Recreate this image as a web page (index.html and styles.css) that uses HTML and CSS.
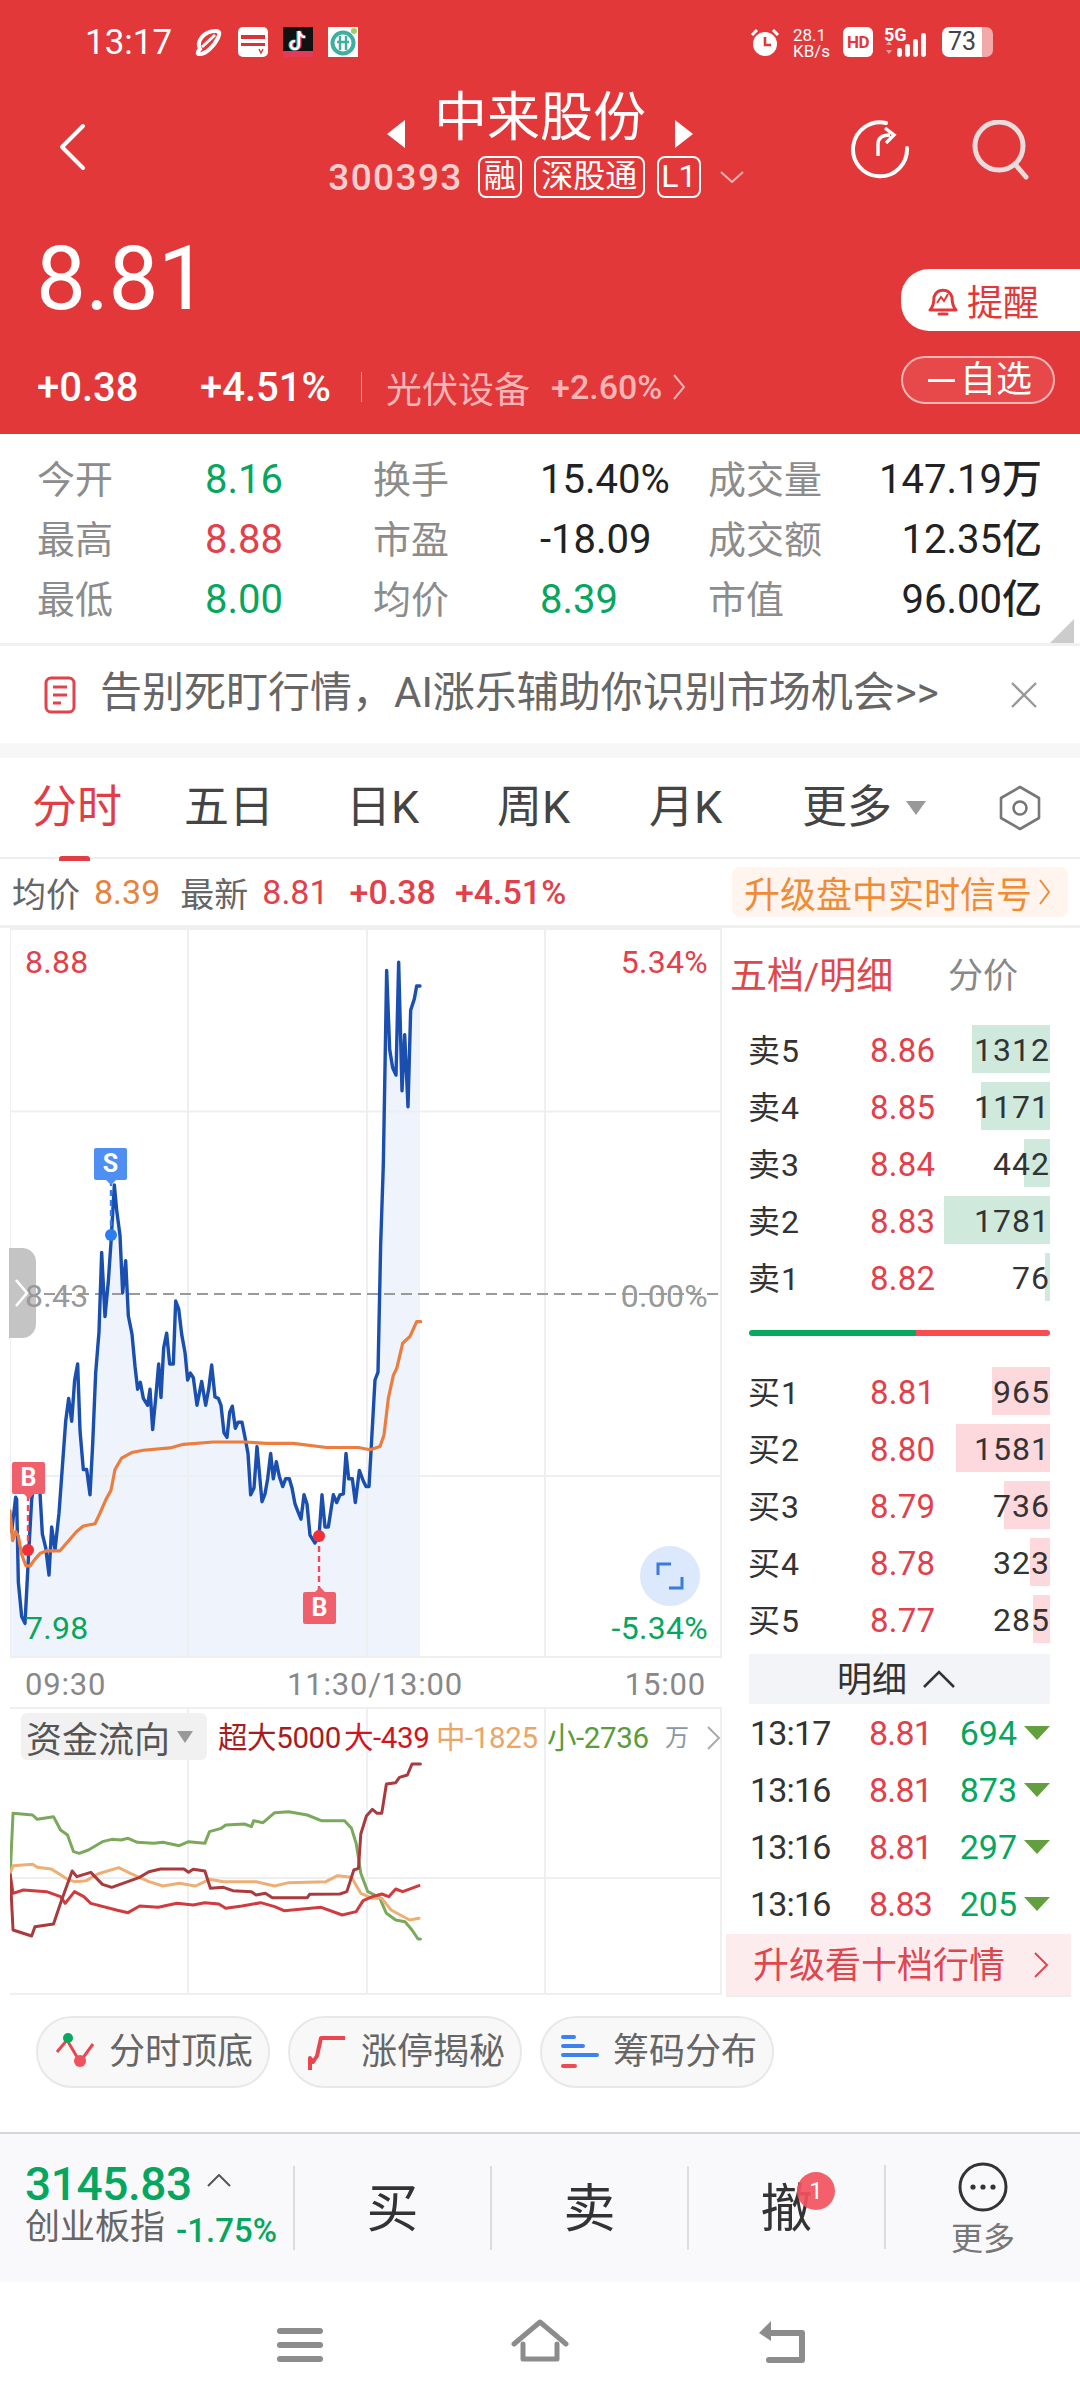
FILE: index.html
```html
<!DOCTYPE html>
<html lang="zh-CN">
<head>
<meta charset="utf-8">
<title>中来股份 300393</title>
<link rel="stylesheet" href="styles.css">
</head>
<body>
<div class="app">
  <header class="header">
    <div class="status">
      <div class="status-left">
        <span class="clock">13:17</span>
        <svg class="si" width="30" height="30" viewBox="0 0 30 30"><path d="M7 22 C3 14 11 4 23 4 C27 4 27 7 25 11 C21 19 13 27 7 27 C4 27 4 25 7 22Z" fill="none" stroke="#fff" stroke-width="4"/><path d="M9 20 L22 8" stroke="#fff" stroke-width="3"/></svg>
        <svg class="si" width="30" height="30" viewBox="0 0 30 30"><rect width="30" height="30" rx="5" fill="#fff"/><rect x="3" y="8" width="24" height="4" fill="#d8323a"/><rect x="3" y="16" width="24" height="3" fill="#d8323a"/><path d="M21 22l2 4 2-4" stroke="#d8323a" stroke-width="1.4" fill="none"/></svg>
        <svg class="si" width="30" height="30" viewBox="0 0 30 30"><rect width="30" height="30" fill="#111"/><path d="M16 4v14a4 4 0 1 1-4-4M16 4c1 4 3 6 6 6" fill="none" stroke="#2ee" stroke-width="3" transform="translate(-1 0)"/><path d="M16 4v14a4 4 0 1 1-4-4M16 4c1 4 3 6 6 6" fill="none" stroke="#f35" stroke-width="3" transform="translate(1 0)"/><path d="M16 4v14a4 4 0 1 1-4-4M16 4c1 4 3 6 6 6" fill="none" stroke="#fff" stroke-width="2.4"/><rect y="24" width="30" height="6" fill="#e23a58"/></svg>
        <svg class="si" width="30" height="30" viewBox="0 0 30 30"><rect width="30" height="30" fill="#fff"/><circle cx="15" cy="16" r="10.5" fill="none" stroke="#3fae9f" stroke-width="4"/><path d="M12 9v14M18 9v14M9 15h12" stroke="#3fae9f" stroke-width="2.4"/><circle cx="26" cy="4" r="3" fill="#9ccf6a"/></svg>
      </div>
      <div class="status-right">
        <svg width="30" height="30" viewBox="0 0 30 30"><circle cx="15" cy="17" r="12" fill="#fff"/><path d="M15 10v8h6" fill="none" stroke="#e2383a" stroke-width="2.6"/><path d="M2 8l5-5M28 8l-5-5" stroke="#fff" stroke-width="3"/></svg>
        <span class="net"><b>28.1</b><b>KB/s</b></span>
        <span class="hd">HD</span>
        <span class="signal">
          <span class="five-g">5G</span>
          <svg width="48" height="32" viewBox="0 0 48 32"><path d="M2 18l3-4 3 4zM2 23l3 4 3-4z" fill="#f1a1a2"/><g fill="#fff"><rect x="13" y="21" width="5" height="9" rx="2.4"/><rect x="21" y="17" width="5" height="13" rx="2.4"/><rect x="29" y="12" width="5" height="18" rx="2.4"/><rect x="37" y="6" width="5" height="24" rx="2.4"/></g></svg>
        </span>
        <span class="battery"><span class="battery-num">73</span></span>
      </div>
    </div>

    <div class="nav">
      <svg class="back" width="28" height="48" viewBox="0 0 28 48"><path d="M25 3 L4 24 L25 45" fill="none" stroke="#fff" stroke-width="4" stroke-linecap="round" stroke-linejoin="round"/></svg>
      <div class="nav-center">
        <div class="title-line">
          <svg width="20" height="28" viewBox="0 0 20 28"><path d="M20 0v28L2 14z" fill="#fff"/></svg>
          <span class="title">中来股份</span>
          <svg width="20" height="28" viewBox="0 0 20 28"><path d="M0 0v28l18-14z" fill="#fff"/></svg>
        </div>
        <div class="code-line">
          <span class="code">300393</span>
          <span class="tag">融</span>
          <span class="tag tag-wide">深股通</span>
          <span class="tag">L1</span>
          <svg class="code-drop" width="24" height="12" viewBox="0 0 24 12"><path d="M1 1l11 10L23 1" fill="none" stroke="#f3b1b2" stroke-width="2"/></svg>
        </div>
      </div>
      <div class="nav-actions">
        <svg width="60" height="60" viewBox="0 0 60 60"><path d="M36 3 A27 27 0 1 0 57 28" fill="none" stroke="#fff" stroke-width="4" stroke-linecap="round"/><path d="M28 36 V24 Q28 15 40 15" fill="none" stroke="#fff" stroke-width="3.4"/><path d="M35 8 L44 15 L36 23" fill="none" stroke="#fff" stroke-width="3.4"/></svg>
        <svg width="58" height="60" viewBox="0 0 58 60"><circle cx="27" cy="26" r="24" fill="none" stroke="#e8dcdc" stroke-width="5"/><path d="M43 44l11 13" stroke="#e8dcdc" stroke-width="5" stroke-linecap="round"/></svg>
      </div>
    </div>

    <div class="quote">
      <div class="quote-main">
        <div class="price">8.81</div>
        <div class="change">
          <span class="chg-abs">+0.38</span>
          <span class="chg-pct">+4.51%</span>
          <span class="chg-rule"></span>
          <span class="sector">光伏设备</span>
          <span class="sector-pct">+2.60%</span>
          <svg width="13" height="26" viewBox="0 0 13 26"><path d="M1 1l10 12L1 25" fill="none" stroke="#f3b1b2" stroke-width="2"/></svg>
        </div>
      </div>
      <div class="quote-side">
        <div class="remind">
          <svg width="36" height="36" viewBox="0 0 36 36"><path d="M5 28 Q9 24 9 15 A9.5 10 0 0 1 27 15 Q27 24 31 28Z" fill="none" stroke="#e2383a" stroke-width="3" stroke-linejoin="round"/><path d="M12 21l4-6 3 4 4-7" fill="none" stroke="#e2383a" stroke-width="2"/><path d="M14 32h8" stroke="#e2383a" stroke-width="3" stroke-linecap="round"/></svg>
          <span>提醒</span>
        </div>
        <div class="watch"><span class="watch-minus"></span>自选</div>
      </div>
    </div>
  </header>

  <section class="stats">
    <span class="k">今开</span><span class="v green">8.16</span><span class="k">换手</span><span class="v">15.40%</span><span class="k">成交量</span><span class="v end">147.19万</span>
    <span class="k">最高</span><span class="v red">8.88</span><span class="k">市盈</span><span class="v">-18.09</span><span class="k">成交额</span><span class="v end">12.35亿</span>
    <span class="k">最低</span><span class="v green">8.00</span><span class="k">均价</span><span class="v green">8.39</span><span class="k">市值</span><span class="v end">96.00亿</span>
    <span class="fold"></span>
  </section>

  <section class="notice">
    <svg width="32" height="38" viewBox="0 0 32 38"><rect x="2" y="2" width="28" height="34" rx="5" fill="none" stroke="#e2424c" stroke-width="3"/><path d="M9 11h14M9 19h14M9 27h8" stroke="#e2424c" stroke-width="3"/></svg>
    <span class="notice-text">告别死盯行情，AI涨乐辅助你识别市场机会&gt;&gt;</span>
    <svg class="notice-close" width="28" height="28" viewBox="0 0 28 28"><path d="M2 2l24 24M26 2L2 26" stroke="#999" stroke-width="2.4"/></svg>
  </section>
  <div class="band"></div>

  <nav class="tabs">
    <span class="tab active">分时</span>
    <span class="tab">五日</span>
    <span class="tab">日K</span>
    <span class="tab">周K</span>
    <span class="tab">月K</span>
    <span class="tab tab-more">更多<svg width="22" height="16" viewBox="0 0 22 16"><path d="M1 1h20L11 15z" fill="#999"/></svg></span>
    <svg class="tab-gear" width="42" height="46" viewBox="0 0 42 46"><path d="M21 2L40 13V33L21 44L2 33V13Z" fill="none" stroke="#777" stroke-width="2.6" stroke-linejoin="round"/><circle cx="21" cy="23" r="6.5" fill="none" stroke="#777" stroke-width="2.6"/></svg>
  </nav>

  <div class="info">
    <span class="info-k">均价</span><span class="orange">8.39</span>
    <span class="info-k info-gap">最新</span><span class="red">8.81</span>
    <span class="red info-num">+0.38</span>
    <span class="red info-num">+4.51%</span>
    <span class="upgrade">升级盘中实时信号<svg width="12" height="26" viewBox="0 0 12 26"><path d="M1 1l9 12L1 25" fill="none" stroke="#ef8c35" stroke-width="2"/></svg></span>
  </div>

  <main class="board">
    <div class="charts">
      <div class="price-chart">
        <svg class="plot" width="712" height="730" viewBox="10 928 712 730">
          <g transform="translate(0 930) scale(0.33333 0.45918)">
            <polygon fill="#eef3fc" points="30,1583 30,1265 35,1310 47,1235 50,1240 55,1420 65,1495 75,1510 85,1370 95,1240 105,1195 118,1200 127,1315 137,1345 147,1405 155,1300 165,1350 177,1270 188,1160 197,1070 206,1020 215,1070 224,980 233,945 240,1090 250,1175 260,1175 270,1230 278,1120 287,965 297,875 305,702 315,842 325,765 333,680 343,555 350,610 360,665 368,790 377,720 385,840 396,880 405,950 413,1000 421,985 430,1020 443,1035 450,1000 458,1088 467,1020 476,945 483,1018 491,910 500,878 509,945 520,945 527,808 536,825 545,880 555,920 563,980 571,965 580,975 591,1035 605,983 617,1035 626,1000 635,947 645,1017 655,1020 663,1035 672,1095 681,1105 689,1050 697,1037 706,1085 714,1072 726,1072 735,1105 744,1140 752,1230 762,1215 771,1125 786,1245 795,1228 803,1195 812,1140 820,1195 829,1158 838,1190 848,1212 857,1195 868,1195 876,1215 885,1250 893,1265 903,1283 912,1230 921,1250 930,1318 945,1335 957,1320 966,1230 975,1300 985,1300 1000,1230 1010,1247 1020,1230 1030,1228 1038,1140 1046,1195 1057,1195 1066,1247 1078,1177 1090,1200 1098,1212 1107,1212 1115,1110 1125,980 1134,963 1142,685 1150,510 1155,300 1160,88 1169,260 1178,300 1188,316 1196,70 1206,350 1214,228 1224,385 1232,175 1243,150 1250,122 1260,122 1260,1583"/>
          </g>
          <g class="grid">
            <path d="M188 928V1658M367 928V1658M545 928V1658M10 1111.5H722M10 1476H722"/>
            <rect x="10" y="929" width="711" height="728" fill="none"/>
          </g>
          <path class="mid-line" d="M10 1294H722"/>
          <g transform="translate(0 930) scale(0.33333 0.45918)">
            <polyline class="line-price" points="35,1310 47,1235 50,1240 55,1420 65,1495 75,1510 85,1370 95,1240 105,1195 118,1200 127,1315 137,1345 147,1405 155,1300 165,1350 177,1270 188,1160 197,1070 206,1020 215,1070 224,980 233,945 240,1090 250,1175 260,1175 270,1230 278,1120 287,965 297,875 305,702 315,842 325,765 333,680 343,555 350,610 360,665 368,790 377,720 385,840 396,880 405,950 413,1000 421,985 430,1020 443,1035 450,1000 458,1088 467,1020 476,945 483,1018 491,910 500,878 509,945 520,945 527,808 536,825 545,880 555,920 563,980 571,965 580,975 591,1035 605,983 617,1035 626,1000 635,947 645,1017 655,1020 663,1035 672,1095 681,1105 689,1050 697,1037 706,1085 714,1072 726,1072 735,1105 744,1140 752,1230 762,1215 771,1125 786,1245 795,1228 803,1195 812,1140 820,1195 829,1158 838,1190 848,1212 857,1195 868,1195 876,1215 885,1250 893,1265 903,1283 912,1230 921,1250 930,1318 945,1335 957,1320 966,1230 975,1300 985,1300 1000,1230 1010,1247 1020,1230 1030,1228 1038,1140 1046,1195 1057,1195 1066,1247 1078,1177 1090,1200 1098,1212 1107,1212 1115,1110 1125,980 1134,963 1142,685 1150,510 1155,300 1160,88 1169,260 1178,300 1188,316 1196,70 1206,350 1214,228 1224,385 1232,175 1243,150 1250,122 1260,122"/>
            <polyline class="line-avg" points="30,1265 38,1330 47,1310 55,1320 65,1360 78,1385 90,1385 105,1370 120,1358 140,1352 180,1352 200,1335 230,1310 250,1298 285,1293 300,1270 318,1240 333,1220 345,1175 365,1150 395,1138 430,1133 510,1128 550,1120 640,1115 735,1115 800,1118 880,1118 980,1127 1075,1127 1110,1132 1140,1125 1152,1100 1165,1020 1180,970 1190,955 1208,900 1230,885 1250,853 1262,853"/>
          </g>
          <path class="drop-blue" d="M111 1180V1235"/>
          <path class="drop-red" d="M28 1495V1550M319 1536V1592"/>
          <circle cx="111" cy="1235" r="6" fill="#2a7ef2"/>
          <circle cx="28" cy="1550" r="6" fill="#ef3038"/>
          <circle cx="319" cy="1536" r="6" fill="#ef3038"/>
        </svg>
        <span class="pin pin-s">S</span>
        <span class="pin pin-b1">B</span>
        <span class="pin pin-b2">B</span>
        <span class="handle"></span>
        <span class="scale scale-hi red">8.88</span>
        <span class="scale scale-mid">8.43</span>
        <span class="scale scale-lo green">7.98</span>
        <span class="scale-r scale-hi red">5.34%</span>
        <span class="scale-r scale-mid">0.00%</span>
        <span class="scale-r scale-lo green">-5.34%</span>
        <svg class="handle-arrow" width="14" height="28" viewBox="0 0 14 28"><path d="M1 1l11 13L1 27" fill="none" stroke="#fff" stroke-width="2.6"/></svg>
        <span class="expand"><svg width="28" height="28" viewBox="0 0 28 28"><path d="M2 13V2H15M26 15V26H13" fill="none" stroke="#3a7be0" stroke-width="3"/></svg></span>
      </div>
      <div class="axis"><span>09:30</span><span class="axis-mid">11:30/13:00</span><span>15:00</span></div>
      <div class="flow">
        <svg class="plot" width="712" height="288" viewBox="10 1707 712 288">
          <g class="grid">
            <path d="M188 1707V1995M367 1707V1995M545 1707V1995M10 1878H722M10 1708H722M10 1994H722M721 1707V1995"/>
          </g>
          <g transform="translate(0 1690) scale(0.46555 0.33333)">
            <polyline class="flow-l" stroke="#7aa95b" points="22,550 28,370 70,375 80,388 115,380 130,420 145,435 158,485 170,490 190,480 220,455 240,448 260,450 275,445 295,457 330,460 350,457 385,467 405,455 440,460 450,425 475,415 485,405 525,402 540,410 545,392 565,398 590,368 620,365 660,375 690,392 740,392 755,415 765,460 775,550 790,605 815,622 830,670 850,690 870,695 885,720 898,747 903,747"/>
            <polyline class="flow-l" stroke="#eeae74" points="22,550 28,527 70,523 80,532 110,537 125,550 145,568 160,575 185,572 210,552 255,533 280,550 320,575 350,588 385,580 420,588 450,568 480,575 550,575 590,588 620,578 700,575 725,557 755,562 775,610 800,625 820,625 840,660 880,690 900,685"/>
            <polyline class="flow-l" stroke="#d13a3e" points="22,555 28,610 50,600 100,605 130,620 140,640 160,605 180,620 195,640 250,660 275,668 300,648 340,652 380,640 415,645 440,638 470,642 485,655 520,648 560,638 590,650 610,662 690,652 735,675 765,665 780,632 800,620 820,612 835,620 850,597 865,605 900,587"/>
            <polyline class="flow-l" stroke="#a93a3d" points="22,555 28,720 68,738 75,710 115,702 130,640 155,543 165,560 195,547 220,583 240,592 300,562 320,545 345,537 395,537 405,547 415,538 440,543 452,595 480,592 500,602 540,605 550,615 570,610 585,623 660,623 665,613 730,612 745,605 760,540 770,535 775,432 787,378 800,358 810,370 820,370 830,282 850,278 858,262 875,255 885,222 903,222"/>
          </g>
        </svg>
        <span class="flow-chip">资金流向<svg width="16" height="12" viewBox="0 0 16 12"><path d="M0 0h16L8 12z" fill="#999"/></svg></span>
        <div class="legend">
          <span class="lg-a">超大5000</span><span class="lg-b">大-439</span><span class="lg-c">中-1825</span><span class="lg-d">小-2736</span><span class="lg-u">万</span>
          <svg width="14" height="24" viewBox="0 0 14 24"><path d="M1 1l11 11L1 23" fill="none" stroke="#aaa" stroke-width="2"/></svg>
        </div>
      </div>
    </div>

    <aside class="book">
      <div class="book-head"><span class="book-title">五档/明细</span><span class="book-alt">分价</span></div>
      <div class="orders">
        <div class="row"><i class="bar sell" style="width:78px"></i><span class="lv">卖5</span><span class="pr">8.86</span><span class="vol">1312</span></div>
        <div class="row"><i class="bar sell" style="width:69px"></i><span class="lv">卖4</span><span class="pr">8.85</span><span class="vol">1171</span></div>
        <div class="row"><i class="bar sell" style="width:26px"></i><span class="lv">卖3</span><span class="pr">8.84</span><span class="vol">442</span></div>
        <div class="row"><i class="bar sell" style="width:106px"></i><span class="lv">卖2</span><span class="pr">8.83</span><span class="vol">1781</span></div>
        <div class="row"><i class="bar sell" style="width:5px"></i><span class="lv">卖1</span><span class="pr">8.82</span><span class="vol">76</span></div>
      </div>
      <div class="split"><span class="split-g"></span><span class="split-r"></span></div>
      <div class="orders">
        <div class="row"><i class="bar buy" style="width:58px"></i><span class="lv">买1</span><span class="pr">8.81</span><span class="vol">965</span></div>
        <div class="row"><i class="bar buy" style="width:94px"></i><span class="lv">买2</span><span class="pr">8.80</span><span class="vol">1581</span></div>
        <div class="row"><i class="bar buy" style="width:46px"></i><span class="lv">买3</span><span class="pr">8.79</span><span class="vol">736</span></div>
        <div class="row"><i class="bar buy" style="width:20px"></i><span class="lv">买4</span><span class="pr">8.78</span><span class="vol">323</span></div>
        <div class="row"><i class="bar buy" style="width:17px"></i><span class="lv">买5</span><span class="pr">8.77</span><span class="vol">285</span></div>
      </div>
      <div class="detail-head"><span>明细</span><svg width="34" height="20" viewBox="0 0 34 20"><path d="M2 18L17 3l15 15" fill="none" stroke="#333" stroke-width="2.6"/></svg></div>
      <div class="trade"><span class="t">13:17</span><span class="tp">8.81</span><span class="tv">694</span><i class="tri"></i></div>
      <div class="trade"><span class="t">13:16</span><span class="tp">8.81</span><span class="tv">873</span><i class="tri"></i></div>
      <div class="trade"><span class="t">13:16</span><span class="tp">8.81</span><span class="tv">297</span><i class="tri"></i></div>
      <div class="trade"><span class="t">13:16</span><span class="tp">8.83</span><span class="tv">205</span><i class="tri"></i></div>
      <div class="level10"><span>升级看十档行情</span><svg width="16" height="28" viewBox="0 0 16 28"><path d="M2 2l12 12L2 26" fill="none" stroke="#e0464e" stroke-width="2"/></svg></div>
    </aside>
  </main>

  <section class="chips">
    <span class="chip">
      <svg width="40" height="40" viewBox="0 0 40 40"><path d="M2 20L12 8l13 22L38 12" fill="none" stroke="#e8474f" stroke-width="3"/><circle cx="13" cy="6" r="5" fill="#0aa860"/><circle cx="25" cy="29" r="6" fill="#f0515a"/></svg>
      分时顶底
    </span>
    <span class="chip">
      <svg width="40" height="40" viewBox="0 0 40 40"><path d="M3 38V26l3 4 4-6 4-18h24" fill="none" stroke="#e8474f" stroke-width="4" stroke-linejoin="round"/></svg>
      涨停揭秘
    </span>
    <span class="chip">
      <svg width="40" height="40" viewBox="0 0 40 40"><path d="M4 5h11M4 14h20M4 23h34" stroke="#3b82ee" stroke-width="4" stroke-linecap="round"/><path d="M4 34h12" stroke="#ef4a52" stroke-width="4" stroke-linecap="round"/></svg>
      筹码分布
    </span>
  </section>

  <footer class="dock">
    <div class="index">
      <div class="index-top"><span class="index-val">3145.83</span><svg width="24" height="13" viewBox="0 0 24 13"><path d="M1 12L12 1l11 11" fill="none" stroke="#555" stroke-width="2"/></svg></div>
      <div class="index-sub"><span class="index-name">创业板指</span><span class="index-pct">-1.75%</span></div>
    </div>
    <div class="act"><span class="act-label">买</span></div>
    <div class="act"><span class="act-label">卖</span></div>
    <div class="act act-cancel"><span class="act-label">撤</span><span class="badge">1</span></div>
    <div class="act act-more">
      <svg width="50" height="50" viewBox="0 0 50 50"><circle cx="25" cy="25" r="23" fill="none" stroke="#333" stroke-width="3"/><circle cx="15" cy="25" r="2.6" fill="#333"/><circle cx="25" cy="25" r="2.6" fill="#333"/><circle cx="35" cy="25" r="2.6" fill="#333"/></svg>
      <span>更多</span>
    </div>
  </footer>

  <div class="sysnav">
    <svg width="46" height="36" viewBox="0 0 46 36"><path d="M3 4h40M3 18h40M3 32h40" stroke="#8c8c8c" stroke-width="6" stroke-linecap="round"/></svg>
    <svg width="58" height="44" viewBox="0 0 58 44"><path d="M3 25L29 3l26 22" fill="none" stroke="#8c8c8c" stroke-width="5" stroke-linecap="round" stroke-linejoin="round"/><path d="M12 25V40H46V25" fill="none" stroke="#8c8c8c" stroke-width="5" stroke-linecap="round" stroke-linejoin="round"/></svg>
    <svg width="48" height="44" viewBox="0 0 48 44"><path d="M14 14H45V41H12" fill="none" stroke="#8c8c8c" stroke-width="6" stroke-linecap="round" stroke-linejoin="round"/><path d="M14 2L2 14L14 22Z" fill="#8c8c8c"/></svg>
  </div>
</div>
</body>
</html>
```
FILE: styles.css
```css
* { box-sizing: border-box; }

html, body {
  margin: 0;
  padding: 0;
  background: #fff;
}

body {
  font-family: Roboto, "Noto Sans CJK SC", sans-serif;
  color: #222;
}

.app {
  width: 1080px;
  height: 2408px;
  overflow: hidden;
  background: #fff;
}

.red { color: #e2404a; }
.green { color: #07a65e; }
.orange { color: #e6833f; }

svg { display: block; flex: none; }

/* header */
.header {
  height: 434px;
  background: #e2383a;
  color: #fff;
}

.status {
  height: 84px;
  padding: 27px 87px 0 85px;
  display: flex;
  justify-content: space-between;
}

.status-left, .status-right {
  display: flex;
  align-items: flex-start;
}

.clock {
  font-size: 35px;
  line-height: 32px;
  width: 87px;
  margin-right: 21px;
}

.si { margin-right: 15px; }

.net {
  display: flex;
  flex-direction: column;
  margin: 0 13px;
  font-size: 17px;
  line-height: 16px;
  width: 37px;
}

.net b { font-weight: 400; white-space: nowrap; }

.hd {
  width: 30px;
  height: 30px;
  background: #fff;
  border-radius: 6px;
  color: #e2383a;
  font-size: 17px;
  font-weight: 700;
  line-height: 30px;
  text-align: center;
  letter-spacing: -0.5px;
}

.signal {
  position: relative;
  margin: 0 10px 0 11px;
}

.five-g {
  position: absolute;
  left: 0;
  top: -1px;
  font-size: 18px;
  font-weight: 700;
  line-height: 18px;
}

.battery {
  width: 51px;
  height: 30px;
  border-radius: 7px;
  background: linear-gradient(90deg, #fff 0 78%, #f3a9aa 78%);
  color: #444;
  display: block;
}

.battery-num {
  display: block;
  width: 40px;
  text-align: center;
  font-size: 25px;
  line-height: 30px;
}

.nav {
  height: 120px;
  display: grid;
  grid-template-columns: 1fr auto 1fr;
  align-items: center;
}

.back {
  margin: 6px 0 0 58px;
}

.nav-center {
  display: flex;
  flex-direction: column;
  align-items: center;
}

.title-line {
  display: flex;
  align-items: center;
  gap: 29px;
  height: 58px;
}

.title-line svg { margin-top: 32px; }

.title {
  font-size: 53px;
  line-height: 58px;
  font-weight: 400;
}

.code-line {
  display: flex;
  align-items: center;
  margin-top: 8px;
  gap: 12px;
  height: 44px;
  margin-left: -8px;
}

.code {
  font-size: 37px;
  font-weight: 500;
  letter-spacing: 1.4px;
  color: #f8cfcf;
  margin-right: 3px;
}

.tag {
  border: 2px solid #fff;
  border-radius: 8px;
  height: 42px;
  width: 44px;
  font-size: 32px;
  line-height: 36px;
  text-align: center;
  color: #fff;
}

.tag-wide { width: 111px; }

.code-drop { margin-left: 7px; }

.nav-actions {
  display: flex;
  justify-content: flex-end;
  gap: 62px;
  padding: 12px 50px 0 0;
}

.quote {
  height: 230px;
  display: flex;
  justify-content: space-between;
}

.price {
  font-size: 89px;
  font-weight: 450;
  line-height: 91px;
  padding-top: 29px;
  margin-left: 36px;
  letter-spacing: -0.5px;
}

.change {
  display: flex;
  align-items: center;
  margin: 43px 0 0 37px;
  height: 40px;
  font-size: 40px;
  font-weight: 500;
}

.chg-abs { width: 163px; }
.chg-pct { width: 161px; }

.chg-rule {
  width: 1px;
  height: 30px;
  background: #f2a0a1;
  margin-right: 24px;
}

.sector {
  color: #f7b4b5;
  font-size: 36px;
  font-weight: 400;
  margin-right: 21px;
}

.sector-pct {
  color: #f7b4b5;
  font-size: 34px;
  margin-right: 11px;
}

.quote-side {
  display: flex;
  flex-direction: column;
  align-items: flex-end;
  padding-top: 65px;
}

.remind {
  width: 179px;
  height: 62px;
  background: #fff;
  border-radius: 28px 0 0 28px;
  color: #e2383a;
  font-size: 36px;
  display: flex;
  align-items: center;
  gap: 6px;
  padding-left: 24px;
}

.watch {
  width: 154px;
  height: 48px;
  margin: 25px 25px 0 0;
  border: 2px solid #f6b6b6;
  border-radius: 24px;
  background: #e7494b;
  font-size: 36px;
  line-height: 42px;
  display: flex;
  align-items: center;
  gap: 5px;
  padding-left: 25px;
}

.watch-minus {
  width: 27px;
  height: 3px;
  background: #fff;
}

/* key figures */
.stats {
  position: relative;
  height: 212px;
  padding: 16px 38px 16px 37px;
  display: grid;
  grid-template-columns: 168px 168px 167px 168px auto 1fr;
  grid-auto-rows: 60px;
  align-items: center;
  border-bottom: 3px solid #f0f0f0;
}

.k {
  color: #8c8c8c;
  font-size: 38px;
  line-height: 60px;
}

.v {
  font-size: 40px;
  font-weight: 450;
  line-height: 60px;
  white-space: nowrap;
}

.v.end { text-align: right; }

.fold {
  position: absolute;
  right: 6px;
  top: 185px;
  width: 24px;
  height: 24px;
  background: #ccc;
  clip-path: polygon(100% 0, 100% 100%, 0 100%);
}

.notice {
  height: 97px;
  display: flex;
  align-items: center;
  padding-left: 44px;
  gap: 24px;
}

.notice-text {
  color: #666;
  font-size: 42px;
  line-height: 50px;
  margin-bottom: 4px;
  white-space: nowrap;
}

.notice-close { margin-left: 47px; }

.band {
  height: 15px;
  background: #f7f7f7;
}

.tabs {
  height: 101px;
  padding-left: 32px;
  display: grid;
  grid-template-columns: 152px 162px 151px 152px 153px 197px auto;
  align-items: center;
  border-bottom: 2px solid #eee;
  font-size: 45px;
  color: #444;
}

.tab { line-height: 96px; white-space: nowrap; }

.tab.active {
  color: #e23c44;
  position: relative;
}

.tab.active::after {
  content: "";
  position: absolute;
  left: 27px;
  bottom: -5px;
  width: 31px;
  height: 5px;
  border-radius: 3px 3px 0 0;
  background: #e23c44;
}

.tab-more {
  display: flex;
  align-items: center;
  gap: 13px;
}

.info {
  height: 69px;
  padding-left: 12px;
  display: flex;
  align-items: center;
  font-size: 34px;
  border-bottom: 3px solid #f0f0f0;
}

.info-k {
  color: #666;
  margin-right: 14px;
}

.info-gap { margin-left: 20px; }

.info-num {
  margin-left: 21px;
  font-weight: 500;
}

.info-num + .info-num { margin-left: 19px; }

.upgrade {
  margin-left: auto;
  margin-right: 12px;
  width: 336px;
  height: 50px;
  background: #fff5ee;
  border-radius: 8px;
  color: #ef8c35;
  font-size: 36px;
  display: flex;
  align-items: center;
  gap: 7px;
  padding-left: 12px;
  white-space: nowrap;
}

/* main board */
.board {
  display: flex;
  height: 1067px;
}

.charts {
  width: 712px;
  margin-left: 10px;
}

.price-chart, .flow {
  position: relative;
}

.price-chart { height: 730px; }

.plot {
  position: absolute;
  left: 0;
  top: 0;
}

.grid {
  fill: none;
  stroke: #eeeff1;
  stroke-width: 2;
}

.mid-line {
  fill: none;
  stroke: #9a9a9a;
  stroke-width: 2;
  stroke-dasharray: 11 6;
}

.line-price, .line-avg, .flow-l {
  fill: none;
  stroke-linejoin: round;
  stroke-linecap: round;
  vector-effect: non-scaling-stroke;
}

.line-price {
  stroke: #1a4fb0;
  stroke-width: 3.4;
}

.line-avg {
  stroke: #ec7d3e;
  stroke-width: 3.2;
}

.flow-l { stroke-width: 3; }

.drop-blue, .drop-red {
  fill: none;
  stroke-width: 2.4;
  stroke-dasharray: 6 4;
}

.drop-blue { stroke: #2a7ef2; }
.drop-red { stroke: #ef4a55; }

.pin {
  position: absolute;
  width: 33px;
  height: 32px;
  border-radius: 2px;
  color: #fff;
  font-size: 25px;
  font-weight: 700;
  line-height: 32px;
  text-align: center;
}

.pin-s { left: 84px; top: 220px; background: #4f8ef2; }
.pin-b1 { left: 2px; top: 534px; background: #f0606c; }
.pin-b2 { left: 293px; top: 664px; background: #f0606c; }

.pin-s::after, .pin-b1::after {
  content: "";
  position: absolute;
  left: 12px;
  bottom: -5px;
  border: 5px solid transparent;
  border-bottom: 0;
}

.pin-s::after { border-top-color: #4f8ef2; }
.pin-b1::after { border-top-color: #f0606c; }

.pin-b2::after {
  content: "";
  position: absolute;
  left: 12px;
  top: -5px;
  border: 5px solid transparent;
  border-top: 0;
  border-bottom-color: #f0606c;
}

.scale, .scale-r {
  position: absolute;
  font-size: 32px;
  line-height: 36px;
  letter-spacing: 0.3px;
}

.scale { left: 15px; }
.scale-r { right: 14px; }

.scale-hi { top: 16px; }
.scale-mid { top: 350px; color: #999; }
.scale-lo { top: 682px; }

.handle {
  position: absolute;
  left: -1px;
  top: 320px;
  width: 27px;
  height: 90px;
  background: #c4c4c4;
  border-radius: 0 14px 14px 0;
}

.handle-arrow {
  position: absolute;
  left: 5px;
  top: 351px;
}

.expand {
  position: absolute;
  left: 630px;
  top: 618px;
  width: 60px;
  height: 60px;
  border-radius: 50%;
  background: #dce8fb;
  display: flex;
  align-items: center;
  justify-content: center;
}

.axis {
  height: 49px;
  display: flex;
  justify-content: space-between;
  align-items: center;
  padding: 3px 16px 0 15px;
  color: #888;
  font-size: 31px;
  letter-spacing: 0.8px;
}

.axis-mid { margin-left: 19px; }

.flow { height: 288px; }

.flow-chip {
  position: absolute;
  left: 11px;
  top: 6px;
  width: 186px;
  height: 47px;
  border-radius: 6px;
  background: #f1f1f1;
  color: #555;
  font-size: 36px;
  display: flex;
  align-items: center;
  gap: 7px;
  padding-left: 5px;
  white-space: nowrap;
}

.legend {
  position: absolute;
  left: 208px;
  top: 14px;
  display: flex;
  align-items: center;
  font-size: 29.5px;
  line-height: 34px;
  letter-spacing: -0.4px;
  white-space: nowrap;
}

.lg-a { color: #a81c20; width: 126px; }
.lg-b { color: #d4141c; width: 92px; }
.lg-c { color: #eba565; width: 111px; }
.lg-d { color: #5a9c3a; width: 118px; }
.lg-u { color: #8a97a5; font-size: 24px; width: 42px; }

/* order book */
.book {
  width: 358px;
  padding: 0 30px 0 27px;
}

.book-head {
  height: 97px;
  margin-left: -19px;
  display: flex;
  align-items: center;
  padding-bottom: 8px;
}

.book-title {
  color: #e0474c;
  font-size: 37px;
  width: 218px;
  white-space: nowrap;
}

.book-alt {
  color: #888;
  font-size: 35px;
}

.orders {
  display: flex;
  flex-direction: column;
  gap: 9px;
}

.row {
  position: relative;
  height: 48px;
  display: grid;
  grid-template-columns: 123px 1fr auto;
  align-items: center;
  font-size: 32px;
}

.bar {
  position: absolute;
  right: 0;
  top: 0;
  bottom: 0;
}

.bar.sell { background: #cfeadd; }
.bar.buy { background: #fdd9dd; }

.lv, .pr, .vol { position: relative; }

.lv {
  color: #333;
  white-space: nowrap;
  letter-spacing: 1px;
  margin-left: -1px;
  padding-bottom: 4px;
}

.pr {
  color: #e2404a;
  font-size: 33px;
  font-weight: 450;
  letter-spacing: 0.2px;
  margin-left: -2px;
}

.vol {
  color: #333;
  letter-spacing: 1px;
}

.split {
  display: flex;
  height: 6px;
  margin: 29px 0 31px;
  border-radius: 3px;
  overflow: hidden;
}

.split-g { width: 167px; background: #07a95f; }
.split-r { flex: 1; background: #fb4a50; }

.detail-head {
  height: 50px;
  margin: 11px 0 0;
  background: #f2f4f8;
  color: #333;
  font-size: 35px;
  display: flex;
  align-items: center;
  gap: 15px;
  padding-left: 88px;
}

.detail-head span { margin-bottom: 5px; }

.trade {
  height: 57px;
  display: grid;
  grid-template-columns: 119px 1fr auto;
  align-items: center;
  font-size: 34px;
  letter-spacing: -0.8px;
  position: relative;
  padding-right: 33px;
  margin-left: 1px;
}

.t { color: #333; }
.tp { color: #e2404a; }
.tv { color: #07a65e; text-align: right; letter-spacing: 0; }

.tri {
  position: absolute;
  right: 0;
  top: 22px;
  width: 26px;
  height: 14px;
  background: #629f3e;
  clip-path: polygon(0 0, 100% 0, 50% 100%);
}

.level10 {
  height: 61px;
  margin: 2px -21px 0 -23px;
  background: #fdecee;
  color: #e0464e;
  font-size: 36px;
  display: flex;
  align-items: center;
  justify-content: space-between;
  padding: 0 22px 0 27px;
  box-shadow: 0 2px 0 #eee;
}

.level10 span { margin-bottom: 5px; }

/* feature chips */
.chips {
  height: 137px;
  padding: 21px 0 0 36px;
  display: flex;
  align-items: flex-start;
  gap: 18px;
}

.chip {
  width: 234px;
  height: 72px;
  background: #f8f8f8;
  border: 2px solid #e8e8e8;
  border-radius: 36px;
  color: #666;
  font-size: 36px;
  line-height: 48px;
  display: flex;
  align-items: center;
  gap: 14px;
  padding: 0 0 1px 17px;
  white-space: nowrap;
}

/* bottom dock */
.dock {
  height: 150px;
  background: #f9f9fb;
  border-top: 2px solid #d6d6d6;
  display: grid;
  grid-template-columns: 293px 197px 197px 197px 1fr;
  align-items: start;
  padding-top: 31px;
}

.index {
  padding-left: 25px;
}

.index-top {
  display: flex;
  align-items: center;
  gap: 15px;
  height: 38px;
}

.index-val {
  color: #07a65e;
  font-size: 46px;
  font-weight: 500;
  letter-spacing: -0.4px;
}

.index-top svg { margin-top: -8px; }

.index-sub {
  display: flex;
  align-items: center;
  gap: 11px;
  height: 46px;
  margin-top: 2px;
}

.index-name {
  color: #666;
  font-size: 35px;
  line-height: 46px;
  white-space: nowrap;
}

.index-pct {
  color: #07a65e;
  font-size: 33px;
  font-weight: 500;
  margin-top: 4px;
}

.act {
  position: relative;
  height: 84px;
  margin-top: 1px;
  border-left: 2px solid #ddd;
  font-size: 52px;
  color: #333;
  display: flex;
  align-items: center;
  justify-content: center;
}

.act-label { margin-bottom: 7px; }

.badge {
  position: absolute;
  left: 108px;
  top: 6px;
  width: 38px;
  height: 38px;
  border-radius: 50%;
  background: rgba(242, 82, 96, 0.92);
  color: #fff;
  font-size: 24px;
  line-height: 38px;
  text-align: center;
}

.act-more {
  flex-direction: column;
  justify-content: flex-start;
  font-size: 32px;
  color: #777;
  margin-top: 0;
}

.act-more svg { margin-top: -3px; }

.act-more span { margin-top: 7px; line-height: 40px; }

/* system navigation */
.sysnav {
  display: flex;
  padding: 38px 0 0 277px;
  align-items: flex-end;
  height: 81px;
  gap: 188px;
}
```
